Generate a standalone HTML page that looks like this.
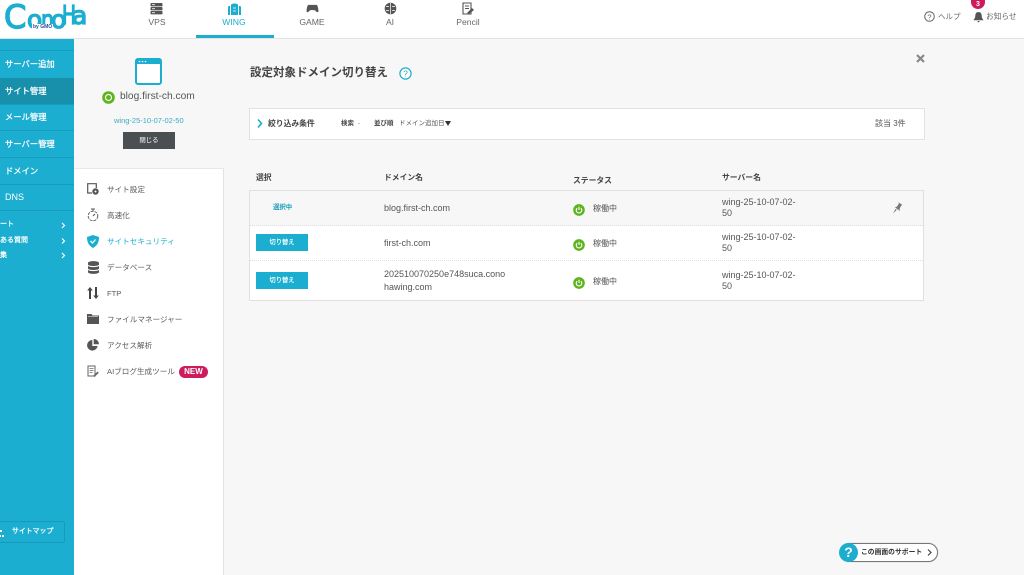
<!DOCTYPE html>
<html lang="ja"><head><meta charset="utf-8"><style>
*{box-sizing:border-box}
html,body{margin:0;padding:0}
body{width:1024px;height:575px;overflow:hidden;background:#f7f7f7;position:relative;font-family:"Liberation Sans","Noto Sans CJK JP",sans-serif;color:#444}
.a{position:absolute;white-space:nowrap}
svg{position:absolute;overflow:visible}
.hdr{left:0;top:0;width:1024px;height:39px;background:#fff;border-bottom:1px solid #e3e3e3}
.side{left:0;top:39px;width:74px;height:536px;background:#1caed0}
.sl{left:0;width:74px;height:1px;background:#189dbc}
.st{left:5px;color:#fff;font-size:8.3px;line-height:12px;-webkit-text-stroke:.25px #fff}
.nav{font-size:8.6px;color:#666;line-height:12px;text-align:center;width:60px}
.menu{left:107px;font-size:7.6px;color:#5a5a5a;line-height:12px}
.th{font-size:7.8px;font-weight:bold;color:#444;line-height:12px}
.td{font-size:9px;color:#555;line-height:13px}
.btn{left:256px;width:52px;height:17px;background:#1caed0;color:#fff;font-size:6.3px;text-align:center;line-height:17px;-webkit-text-stroke:.15px #fff}
.sv{left:722px;font-size:9px;color:#555;line-height:11px;white-space:normal;width:80px}
.dot{left:250px;width:673px;height:0;border-top:1px dotted #ddd}
</style></head><body>
<div class="a hdr"></div>
<svg style="left:0;top:0" width="100" height="38" viewBox="0 0 100 38" font-family="DejaVu Sans" fill="#1caed0" stroke="#1caed0" stroke-width="1.300">
<text x="4" y="28" font-size="32">C</text>
<text x="27" y="28" font-size="25">o</text>
<text x="41" y="28" font-size="25" textLength="13" lengthAdjust="spacingAndGlyphs">n</text>
<text x="51" y="28" font-size="25">o</text>
<text x="62" y="24" font-size="26" textLength="14" lengthAdjust="spacingAndGlyphs">H</text>
<text x="72" y="24" font-size="25">a</text>
</svg>
<div class="a" style="left:32px;top:24px;font-size:5px;line-height:6px;font-weight:bold;color:#2b4a9b;background:#fff;padding:0 1px">by GMO</div>

<svg style="left:150px;top:2px" width="13" height="13" viewBox="0 0 13 13"><g fill="#555"><rect x=".5" y="1" width="12" height="3.400" rx=".8"/><rect x=".5" y="5" width="12" height="3.400" rx=".8"/><rect x=".5" y="9" width="12" height="3.400" rx=".8"/></g><g fill="#fff"><rect x="2" y="2.300" width="3" height=".8"/><rect x="2" y="6.300" width="3" height=".8"/><rect x="2" y="10.300" width="3" height=".8"/></g></svg>
<div class="a nav" style="left:127px;top:16px">VPS</div>
<svg style="left:228px;top:2px" width="13" height="13" viewBox="0 0 13 13"><path d="M0 4.500l2-.7V13H0zM13 4.500l-2-.7V13h2zM3 3c0-2 7-2 7 0v10H3z" fill="#1caed0"/><path d="M5 6h3M5 9h3" stroke="#fff" stroke-width=".7"/></svg>
<div class="a nav" style="left:204px;top:16px;color:#1caed0">WING</div>
<div class="a" style="left:196px;top:35px;width:78px;height:3px;background:#1caed0"></div>
<svg style="left:306px;top:4px" width="13" height="9" viewBox="0 0 15 11"><path d="M3 1h9c1.500 0 2 2 2.500 5s.5 4-1 4-2.500-2.500-3.500-2.500H5C4 7.500 3 10 1.500 10S0 9 .5 6 1.500 1 3 1z" fill="#555"/></svg>
<div class="a nav" style="left:282px;top:16px">GAME</div>
<svg style="left:384px;top:2px" width="13" height="13" viewBox="0 0 13 13"><circle cx="6.500" cy="6.500" r="5.800" fill="#555"/><path d="M6.500 1v11M2 4.500h3M8 4.500h3M2 8.500h3M8 8.500h3" stroke="#fff" stroke-width=".7"/></svg>
<div class="a nav" style="left:360px;top:16px">AI</div>
<svg style="left:462px;top:2px" width="13" height="14" viewBox="0 0 13 14"><path d="M1 1h8v11H1z" fill="none" stroke="#555" stroke-width="1.100"/><path d="M3 4h4M3 6.500h4" stroke="#555"/><path d="M5 11l5-5 2 2-5 4z" fill="#555"/></svg>
<div class="a nav" style="left:438px;top:16px">Pencil</div>

<svg style="left:924px;top:11px" width="11" height="11" viewBox="0 0 11 11"><circle cx="5.500" cy="5.500" r="4.800" fill="none" stroke="#666"/><text x="5.500" y="8.300" font-size="7.500" font-family="Liberation Sans" text-anchor="middle" fill="#666">?</text></svg>
<div class="a" style="left:938px;top:11px;font-size:7.500px;line-height:11px;color:#666">ヘルプ</div>
<svg style="left:973px;top:11px" width="11" height="12" viewBox="0 0 12 12"><path d="M6 .5c2.500 0 3.500 2 3.500 4 0 2.500 1 3.500 2 5H.5c1-1.500 2-2.500 2-5 0-2 1-4 3.500-4zM4.500 10.300h3L6 12z" fill="#555"/></svg>
<div class="a" style="left:986px;top:11px;font-size:7.700px;line-height:11px;color:#666">お知らせ</div>
<div class="a" style="left:971px;top:0;width:14px;height:9px;background:#cc1c5e;border-radius:0 0 7px 7px;color:#fff;font-size:7px;font-weight:bold;text-align:center;line-height:9px">3</div>

<div class="a side"></div>
<div class="a sl" style="top:50px"></div>
<div class="a" style="left:0;top:78px;width:74px;height:26px;background:#188fab"></div>
<div class="a sl" style="top:104px"></div>
<div class="a sl" style="top:130px"></div>
<div class="a sl" style="top:157px"></div>
<div class="a sl" style="top:184px"></div>
<div class="a sl" style="top:210px"></div>
<div class="a st" style="top:58px">サーバー追加</div>
<div class="a st" style="top:85px">サイト管理</div>
<div class="a st" style="top:111px">メール管理</div>
<div class="a st" style="top:138px">サーバー管理</div>
<div class="a st" style="top:165px">ドメイン</div>
<div class="a st" style="top:191px;font-size:9px;-webkit-text-stroke:0">DNS</div>
<div class="a st" style="left:0;top:219px;font-size:7px">ート</div>
<div class="a st" style="left:0;top:235px;font-size:7px">ある質問</div>
<div class="a st" style="left:0;top:250px;font-size:7px">集</div>
<svg style="left:61px;top:222px" width="5" height="36" viewBox="0 0 5 36"><path d="M1 1l2.500 2.500L1 6M1 16.500L3.500 19 1 21.500M1 31l2.500 2.500L1 36" fill="none" stroke="#fff" stroke-width="1.200"/></svg>
<div class="a" style="left:-6px;top:521px;width:71px;height:22px;border:1px solid #179ab9;border-radius:2px"></div>
<svg style="left:0;top:529px" width="5" height="9" viewBox="0 0 5 9"><path d="M0 1h2v2H0zM2 6h2v2H2zM0 6h1v2H0z" fill="#fff"/></svg>
<div class="a st" style="left:12px;top:526px;font-size:6.900px">サイトマップ</div>

<div class="a" style="left:74px;top:168px;width:150px;height:407px;background:#fff;border-right:1px solid #e3e3e3;border-top:1px solid #e8e8e8"></div>

<svg style="left:135px;top:58px" width="27" height="27" viewBox="0 0 27 27"><rect x="1" y="1" width="25" height="25" rx="2" fill="#fff" stroke="#1caed0" stroke-width="2"/><rect x="1" y="1" width="25" height="5" fill="#1caed0"/><g fill="#fff"><circle cx="4.500" cy="3.500" r=".8"/><circle cx="7.500" cy="3.500" r=".8"/><circle cx="10.500" cy="3.500" r=".8"/></g></svg>
<svg style="left:102px;top:91px" width="13" height="13" viewBox="0 0 13 13"><circle cx="6.500" cy="6.500" r="6.300" fill="#5cb41e"/><circle cx="6.500" cy="6.500" r="3" fill="none" stroke="#fff" stroke-width="1.200"/></svg>
<div class="a" style="left:120px;top:90px;font-size:10.200px;line-height:14px;color:#555">blog.first-ch.com</div>
<div class="a" style="left:114px;top:115px;font-size:7.500px;line-height:11px;color:#3fa9c5">wing-25-10-07-02-50</div>
<div class="a" style="left:123px;top:132px;width:52px;height:17px;background:#4a4f52;color:#fff;font-size:6.400px;text-align:center;line-height:17px">閉じる</div>

<svg style="left:87px;top:183px" width="12" height="12" viewBox="0 0 12 12"><path d="M5 10H.7V.7h8.600V5" fill="none" stroke="#555" stroke-width="1.200"/><circle cx="8.500" cy="8.500" r="3.200" fill="#555"/><circle cx="8.500" cy="8.500" r="1" fill="#fff"/></svg>
<div class="a menu" style="top:184px">サイト設定</div>
<svg style="left:87px;top:208px" width="12" height="14" viewBox="0 0 12 14"><circle cx="6" cy="8" r="4.800" fill="none" stroke="#666" stroke-dasharray="3 1"/><path d="M4 1h4M6 1v2M6 8l2-2" stroke="#555"/></svg>
<div class="a menu" style="top:210px">高速化</div>
<svg style="left:87px;top:235px" width="12" height="13" viewBox="0 0 12 13"><path d="M6 0l6 2c0 5-1.500 8.500-6 11C1.500 10.500 0 7 0 2z" fill="#1caed0"/><path d="M3.500 6l2 2 3-3.500" fill="none" stroke="#fff" stroke-width="1.300"/></svg>
<div class="a menu" style="top:236px;color:#1caed0">サイトセキュリティ</div>
<svg style="left:88px;top:261px" width="11" height="13" viewBox="0 0 11 13"><path d="M0 2c0-2.500 11-2.500 11 0v1.500c0 2-11 2-11 0zM0 5c2 1.500 9 1.500 11 0v2.500c0 2-11 2-11 0zM0 9c2 1.500 9 1.500 11 0v2c0 2.500-11 2.500-11 0z" fill="#555"/></svg>
<div class="a menu" style="top:262px">データベース</div>
<svg style="left:87px;top:287px" width="12" height="12" viewBox="0 0 12 12"><path d="M3 0l2.800 3.500H4V12H2V3.500H.2zM9 12L6.200 8.500H8V0h2v8.500h1.800z" fill="#444"/></svg>
<div class="a menu" style="top:288px">FTP</div>
<svg style="left:87px;top:314px" width="12" height="10" viewBox="0 0 12 10"><path d="M0 0h4.500l1 1.500H12V10H0z" fill="#555"/><path d="M1 2.500h10" stroke="#fff" stroke-width=".5"/></svg>
<div class="a menu" style="top:314px">ファイルマネージャー</div>
<svg style="left:87px;top:339px" width="12" height="12" viewBox="0 0 12 12"><path d="M5.300 1a5.300 5.300 0 1 0 5.300 6H5.300z" fill="#555"/><path d="M6.700 0A5.300 5.300 0 0 1 12 5.300H6.700z" fill="#555"/></svg>
<div class="a menu" style="top:340px">アクセス解析</div>
<svg style="left:87px;top:365px" width="12" height="13" viewBox="0 0 12 13"><path d="M1 1h7v10H1z" fill="none" stroke="#666" stroke-width="1"/><path d="M2.500 3.500h4M2.500 5.500h4M2.500 7.500h3" stroke="#666" stroke-width=".8"/><path d="M6 11l4.500-4.500 1.300 1.300L7.500 12z" fill="#666"/></svg>
<div class="a menu" style="top:366px">AIブログ生成ツール</div>
<div class="a" style="left:179px;top:366px;width:29px;height:12px;background:#cc1c5e;border-radius:6px;color:#fff;font-size:8px;font-weight:bold;text-align:center;line-height:12px">NEW</div>

<div class="a" style="left:250px;top:65px;font-size:11.500px;font-weight:bold;line-height:16px;color:#444">設定対象ドメイン切り替え</div>
<svg style="left:399px;top:67px" width="13" height="13" viewBox="0 0 13 13"><circle cx="6.500" cy="6.500" r="5.600" fill="#fff" stroke="#1caed0" stroke-width="1.200"/><text x="6.500" y="9.500" font-size="8.500" font-family="Liberation Sans" text-anchor="middle" fill="#1caed0">?</text></svg>
<svg style="left:916px;top:54px" width="9" height="9" viewBox="0 0 9 9"><path d="M1 1l7 7M8 1L1 8" stroke="#888" stroke-width="2.200"/></svg>

<div class="a" style="left:249px;top:108px;width:676px;height:32px;background:#fff;border:1px solid #e3e3e3"></div>
<svg style="left:257px;top:119px" width="6" height="9" viewBox="0 0 6 9"><path d="M1 .5l3.500 4L1 8.500" fill="none" stroke="#1caed0" stroke-width="1.600"/></svg>
<div class="a" style="left:268px;top:118px;font-size:7.800px;font-weight:bold;line-height:11px;color:#444">絞り込み条件</div>
<div class="a" style="left:341px;top:118px;font-size:6.500px;font-weight:bold;line-height:11px;color:#444">検索</div>
<div class="a" style="left:358px;top:118px;font-size:6.500px;line-height:11px;color:#777">-</div>
<div class="a" style="left:374px;top:118px;font-size:6.500px;font-weight:bold;line-height:11px;color:#444">並び順</div>
<div class="a" style="left:399px;top:118px;font-size:6.500px;line-height:11px;color:#555">ドメイン追加日</div>
<svg style="left:445px;top:121px" width="6" height="5" viewBox="0 0 6 5"><path d="M0 0h6L3 5z" fill="#333"/></svg>
<div class="a" style="left:875px;top:118px;font-size:8px;line-height:12px;color:#555">該当 3件</div>

<div class="a th" style="left:256px;top:172px">選択</div>
<div class="a th" style="left:384px;top:172px">ドメイン名</div>
<div class="a th" style="left:573px;top:175px">ステータス</div>
<div class="a th" style="left:722px;top:172px">サーバー名</div>

<div class="a" style="left:249px;top:190px;width:675px;height:111px;background:#fff;border:1px solid #e0e0e0"></div>
<div class="a" style="left:250px;top:191px;width:673px;height:35px;background:#f7f7f7"></div>
<div class="a dot" style="top:225px"></div>
<div class="a dot" style="top:260px"></div>

<div class="a" style="left:273px;top:203px;font-size:6.400px;font-weight:bold;line-height:10px;color:#1a9cb9">選択中</div>
<div class="a td" style="left:384px;top:202px">blog.first-ch.com</div>
<div class="a td" style="left:384px;top:237px">first-ch.com</div>
<div class="a td" style="left:384px;top:268px;line-height:13px">202510070250e748suca.cono<br>hawing.com</div>

<div class="a btn" style="top:234px">切り替え</div>
<div class="a btn" style="top:272px">切り替え</div>

<svg style="left:573px;top:204px" width="12" height="12" viewBox="0 0 13 13"><circle cx="6.500" cy="6.500" r="6.300" fill="#5cb41e"/><path d="M4.500 4.500a3 3 0 1 0 4 0M6.500 3v3.500" fill="none" stroke="#fff" stroke-width="1.200"/></svg>
<svg style="left:573px;top:239px" width="12" height="12" viewBox="0 0 13 13"><circle cx="6.500" cy="6.500" r="6.300" fill="#5cb41e"/><path d="M4.500 4.500a3 3 0 1 0 4 0M6.500 3v3.500" fill="none" stroke="#fff" stroke-width="1.200"/></svg>
<svg style="left:573px;top:277px" width="12" height="12" viewBox="0 0 13 13"><circle cx="6.500" cy="6.500" r="6.300" fill="#5cb41e"/><path d="M4.500 4.500a3 3 0 1 0 4 0M6.500 3v3.500" fill="none" stroke="#fff" stroke-width="1.200"/></svg>
<div class="a td" style="left:593px;top:202px;font-size:8px">稼働中</div>
<div class="a td" style="left:593px;top:237px;font-size:8px">稼働中</div>
<div class="a td" style="left:593px;top:275px;font-size:8px">稼働中</div>

<div class="a sv" style="top:197px">wing-25-10-07-02-50</div>
<div class="a sv" style="top:232px">wing-25-10-07-02-50</div>
<div class="a sv" style="top:270px">wing-25-10-07-02-50</div>
<svg style="left:892px;top:202px" width="11" height="12" viewBox="0 0 11 12"><path d="M6 0l4.500 3-1.500.8-1.500 3.500.5 1.700-5-3.500 2-1 2-3zM3.500 7L1 11.500l3.800-3.600z" fill="#777"/></svg>

<div class="a" style="left:840px;top:543px;width:98px;height:19px;background:#fff;border:1px solid #777;border-radius:10px;box-shadow:0 0 1px #aaa"></div>
<div class="a" style="left:839px;top:543px;width:19px;height:19px;border-radius:50%;background:#1caed0;color:#fff;font-size:14px;font-weight:bold;text-align:center;line-height:19px">?</div>
<div class="a" style="left:861px;top:547px;font-size:6.800px;font-weight:bold;line-height:11px;color:#333">この画面のサポート</div>
<svg style="left:927px;top:549px" width="5" height="7" viewBox="0 0 5 7"><path d="M1 .5l3 3-3 3" fill="none" stroke="#444" stroke-width="1.200"/></svg>
</body></html>
